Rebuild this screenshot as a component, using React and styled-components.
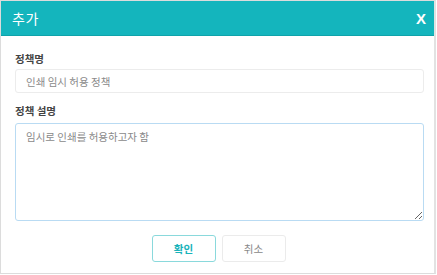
import React from "react";
import styled, { createGlobalStyle } from "styled-components";

const Global = createGlobalStyle`
  html, body { margin: 0; padding: 0; background: #fff; }
  body { font-family: "Noto Sans CJK KR", "Noto Sans", sans-serif; }
  * { box-sizing: border-box; }
`;

const Dialog = styled.div`
  width: 436px;
  height: 274px;
  border: 1px solid #dcdcdc;
  border-right: 2px solid #e2e2e2;
  background: #fff;
  display: flex;
  flex-direction: column;
`;

const Header = styled.div`
  height: 35px;
  flex: none;
  background: #14b5bd;
  border-bottom: 1px solid #0fa3aa;
  display: flex;
  align-items: center;
  justify-content: space-between;
  padding: 0 8px 0 11px;
  color: #fff;
`;

const Title = styled.h1`
  margin: 0;
  font-size: 14px;
  font-weight: 400;
  letter-spacing: 0.5px;
`;

const Close = styled.button`
  border: none;
  background: none;
  color: #fff;
  font-family: "Liberation Sans", Arial, sans-serif;
  font-weight: 700;
  font-size: 15px;
  padding: 0;
  line-height: 1;
  cursor: pointer;
`;

const Body = styled.div`
  padding: 16px 10px 0 14px;
  display: flex;
  flex-direction: column;
`;

const Label = styled.label`
  font-size: 10.5px;
  font-weight: 700;
  color: #444;
  line-height: 14px;
  margin-bottom: ${(p) => p.$mb || 5}px;
`;

const Input = styled.input`
  height: 24px;
  margin: 0 0 11px;
  border: 1px solid #ececec;
  border-radius: 3px;
  padding: 0 10px;
  font-family: inherit;
  font-size: 10.5px;
  color: #888;
  outline: none;
  &::placeholder { color: #8a8a8a; }
`;

const TextArea = styled.textarea`
  height: 98px;
  margin: 0;
  border: 1px solid #b9dbf3;
  border-radius: 3px;
  padding: 5px 10px;
  font-family: inherit;
  font-size: 10.5px;
  color: #888;
  outline: none;
  resize: vertical;
  &::placeholder { color: #8a8a8a; }
`;

const Footer = styled.div`
  display: flex;
  justify-content: center;
  gap: 6px;
  padding-top: 14px;
  padding-left: 2px;
`;

const Button = styled.button`
  width: 64px;
  height: 27px;
  border-radius: 3px;
  background: #fff;
  font-family: inherit;
  font-size: 10.5px;
  border: 1px solid ${(p) => (p.$primary ? "#8ad9dc" : "#ebebeb")};
  color: ${(p) => (p.$primary ? "#19b3ba" : "#888")};
  font-weight: ${(p) => (p.$primary ? 700 : 400)};
  cursor: pointer;
`;

export default function App() {
  return (
    <>
      <Global />
      <Dialog>
        <Header>
          <Title>추가</Title>
          <Close>X</Close>
        </Header>
        <Body>
          <Label $mb={3}>정책명</Label>
          <Input placeholder="인쇄 임시 허용 정책" />
          <Label $mb={5}>정책 설명</Label>
          <TextArea placeholder="임시로 인쇄를 허용하고자 함" />
        </Body>
        <Footer>
          <Button $primary>확인</Button>
          <Button>취소</Button>
        </Footer>
      </Dialog>
    </>
  );
}
